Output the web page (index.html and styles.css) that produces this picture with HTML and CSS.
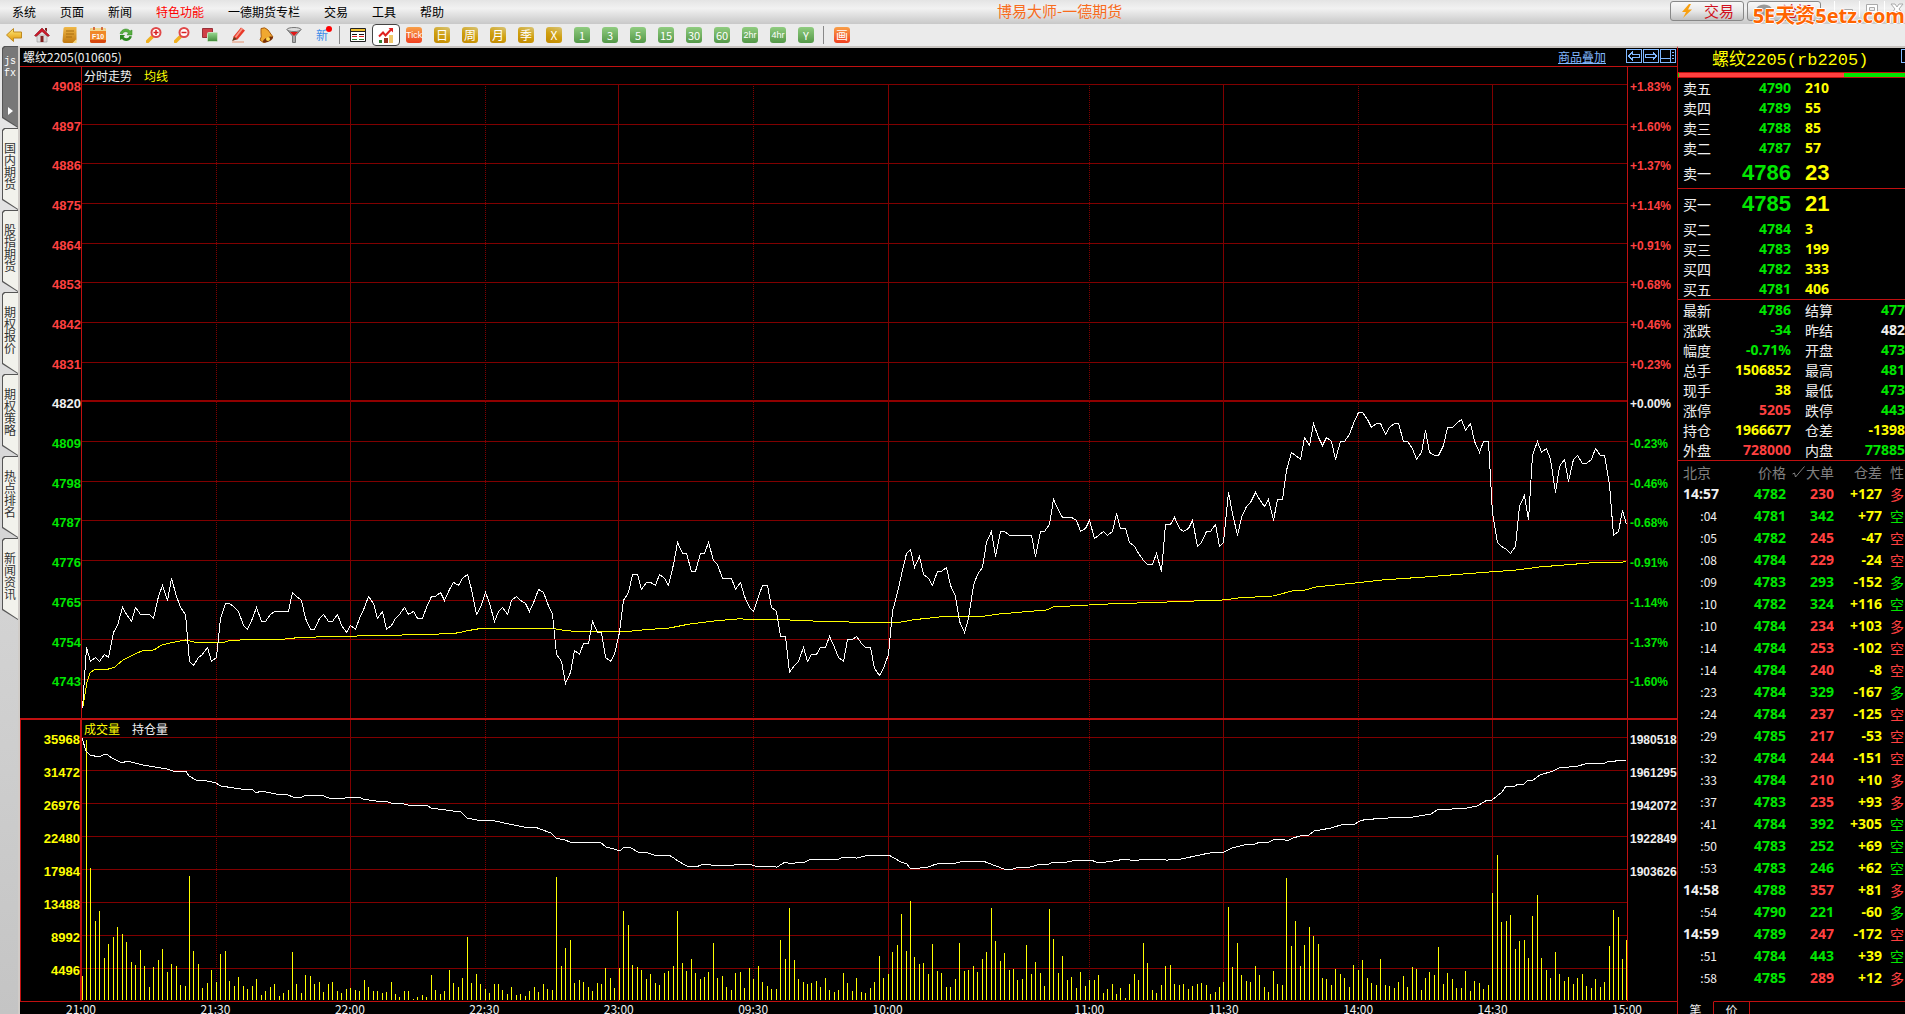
FILE: index.html
```html
<!DOCTYPE html>
<html lang="zh-CN">
<head>
<meta charset="utf-8">
<title>博易大师-一德期货</title>
<link rel="stylesheet" href="styles.css">
</head>
<body>
<svg class="defs" aria-hidden="true">
  <defs>
    <linearGradient id="gold" x1="0" y1="0" x2="0" y2="1"><stop offset="0" stop-color="#fff080"/><stop offset="1" stop-color="#e09000"/></linearGradient>
    <linearGradient id="tan" x1="0" y1="0" x2="0" y2="1"><stop offset="0" stop-color="#f0b848"/><stop offset="1" stop-color="#c07810"/></linearGradient>
    <linearGradient id="leaf" x1="0" y1="0" x2="0" y2="1"><stop offset="0" stop-color="#98d890"/><stop offset="1" stop-color="#408838"/></linearGradient>
  </defs>
</svg>
<header class="menubar">
  <nav class="menu">
    <button>系统</button><button>页面</button><button>新闻</button><button class="hot">特色功能</button><button>一德期货专栏</button><button>交易</button><button>工具</button><button>帮助</button>
  </nav>
  <h1 class="app-title">博易大师-一德期货</h1>
  <div class="actions">
    <button class="pill"><svg width="14" height="16" viewBox="0 0 14 16"><path d="M9 1L2 9h4L3 15l9-8.500H8L11 1z" fill="#f8a010"/></svg>交易</button>
    <button class="pill"><svg width="16" height="14" viewBox="0 0 16 14"><ellipse cx="8" cy="6" rx="8" ry="5.500" fill="#999"/><path d="M5 10l-1 4 5-3z" fill="#999"/></svg>论坛</button>
    <div class="win">
      <button aria-label="最小化"><svg width="14" height="14" viewBox="0 0 14 14"><path d="M1.500 7.500h11v3h-11z" fill="#fff" stroke="#aaa"/></svg></button>
      <button aria-label="最大化"><svg width="14" height="14" viewBox="0 0 14 14"><path d="M1.500 2.500h11v9h-11z M4.500 5.500h5v3h-5z" fill="#fff" fill-rule="evenodd" stroke="#aaa"/></svg></button>
      <button aria-label="关闭"><svg width="14" height="14" viewBox="0 0 14 14"><path d="M1 2h4l2 3 2-3h4L9 7l4 5H9L7 9l-2 3H1l4-5z" fill="#fff" stroke="#aaa"/></svg></button>
    </div>
    <span class="brand">5E天资5etz.com</span>
  </div>
</header>
<div class="toolbar">
  <button aria-label="后退"><svg viewBox="0 0 16 16"><path d="M.5 8L7.500 1.500V5h8v6h-8v3.500z" fill="url(#gold)" stroke="#c08a20"/></svg></button>
  <button aria-label="首页"><svg viewBox="0 0 16 16"><path d="M3 8h10v7H3z" fill="#ddd" stroke="#999" stroke-width=".6"/><path d="M.5 8.500L8 1l7.500 7.500-1.500 1L8 4.500 2 9.500z" fill="#d01828" stroke="#801020" stroke-width=".6"/><path d="M11 1h2v4l-2-2zM6.500 9h3v6h-3z" fill="#802020"/></svg></button>
  <button aria-label="便笺"><svg viewBox="0 0 16 16"><path d="M1.500 1.500Q1.500 0 3 0h11.500v13L12 16H2.500Q.5 16 .5 14z" fill="url(#tan)"/><path d="M4 4h8M4 7h8M4 10h6" stroke="#a86c10"/><path d="M14.500 12v4h-4z" fill="#f8d880"/></svg></button>
  <button aria-label="F10资料"><svg viewBox="0 0 16 16"><rect y="1" width="16" height="15" rx="2" fill="#f08828"/><path d="M0 4V3q0-2 2-2h12q2 0 2 2v1z" fill="#f0d890"/><path d="M4 0v3M12 0v3" stroke="#d04818" stroke-width="1.500"/><path d="M0 13h16v1q0 2-2 2H2q-2 0-2-2z" fill="#d84810"/><text x="8" y="12" text-anchor="middle" class="tiny">F10</text></svg></button>
  <button aria-label="刷新"><svg viewBox="0 0 16 16"><path d="M2 6.500C4 1 10 1 12 4l2-1v5H9l1.500-2C8 4 5.500 4.500 4.500 7z" fill="#58b040" stroke="#2d8420" stroke-width=".5"/><path d="M14 9.500C12 15 6 15 4 12l-2 1V8h5l-1.500 2c2.500 2 5 1.500 6-1z" fill="#2d8820"/></svg></button>
  <button aria-label="放大"><svg viewBox="0 0 16 16"><path d="M1.500 14.500L6 10" stroke="#f0b020" stroke-width="3.500" stroke-linecap="round"/><circle cx="10" cy="5.500" r="4.500" fill="#fff" stroke="#e04848" stroke-width="2"/><path d="M10 3v5M7.500 5.500h5" stroke="#d82020" stroke-width="1.500"/></svg></button>
  <button aria-label="缩小"><svg viewBox="0 0 16 16"><path d="M1.500 14.500L6 10" stroke="#f0b020" stroke-width="3.500" stroke-linecap="round"/><circle cx="10" cy="5.500" r="4.500" fill="#fff" stroke="#e04848" stroke-width="2"/><path d="M7.500 5.500h5" stroke="#d82020" stroke-width="1.500"/></svg></button>
  <button aria-label="叠加"><svg viewBox="0 0 16 16"><path d="M.5 1.500h10v9H.5z" fill="#d04048" stroke="#983038"/><rect x="5.500" y="5.500" width="10" height="9" rx="1" fill="url(#leaf)" stroke="#c8e0c0"/></svg></button>
  <button aria-label="画笔"><svg viewBox="0 0 16 16"><path d="M3.500 9.500L11 .5l4 3L7.500 12.500l-4.500 1z" fill="#e83828"/><path d="M5 9.500L11.500 1 13 2 6 11z" fill="#f89888"/><path d="M4 10l3 2-5 2z" fill="#604020"/><path d="M2 15h12" stroke="#e8b098" stroke-width="1.500"/></svg></button>
  <button aria-label="预警"><svg viewBox="0 0 16 16"><path d="M3 1.500Q7-.5 10 3l5 7-9 6-4-3q2-3 1-7z" fill="#f0a830" stroke="#a85c10"/><ellipse cx="10" cy="12.500" rx="5.500" ry="2.200" transform="rotate(-25 10 12.500)" fill="#783008"/><circle cx="10" cy="12" r="2" fill="#ffd850"/></svg></button>
  <button aria-label="筛选"><svg viewBox="0 0 16 16"><path d="M1 2.500h14L9.500 9v6.500h-3V9z" fill="#aaa" stroke="#777"/><ellipse cx="8" cy="2.500" rx="7" ry="2" fill="#ddd" stroke="#777"/><path d="M4 5h8L8 9z" fill="#e01818"/></svg></button>
  <button class="new" aria-label="新功能">新</button>
  <i class="sep"></i>
  <button aria-label="报价表"><svg viewBox="0 0 16 16"><path d="M.5 1.500h15v13H.5z" fill="#fff" stroke="#222"/><path d="M1 2h14v2H1z" fill="#f0c030"/><path d="M1 4.500h14" stroke="#222"/><path d="M2 7.500h5M9 7.500h5" stroke="#111"/><path d="M2 9.500h5M9 9.500h5" stroke="#e02020"/><path d="M2 12.500h5M9 12.500h5" stroke="#208020"/></svg></button>
  <button class="on" aria-label="分时图"><svg viewBox="0 0 16 16"><path d="M1 13h3v3H1z" fill="#308030"/><path d="M6 11h4v5H6z" fill="#a03020"/><path d="M11 8h4v8h-4z" fill="#f0c868"/><path d="M1 9.500l4-4 2.500 3 6-6.500" fill="none" stroke="#e02020" stroke-width="2"/><path d="M10.500 1H15v4.500z" fill="#e02020"/></svg></button>
  <button><span class="chip red narrow">Tick</span></button>
  <button><span class="chip gold">日</span></button>
  <button><span class="chip gold">周</span></button>
  <button><span class="chip gold">月</span></button>
  <button><span class="chip gold">季</span></button>
  <button><span class="chip gold">X</span></button>
  <button><span class="chip green">1</span></button>
  <button><span class="chip green">3</span></button>
  <button><span class="chip green">5</span></button>
  <button><span class="chip green">15</span></button>
  <button><span class="chip green">30</span></button>
  <button><span class="chip green">60</span></button>
  <button><span class="chip green narrow">2hr</span></button>
  <button><span class="chip green narrow">4hr</span></button>
  <button><span class="chip green">Y</span></button>
  <i class="sep"></i>
  <button><span class="chip red">画</span></button>
</div>
<div class="workspace">
  <nav class="side">
    <button class="tab active"><span>js</span><span>fx</span><svg width="5" height="8" viewBox="0 0 5 8"><path d="M0 0l5 4-5 4z" fill="#fff"/></svg></button>
    <button class="tab"><span>国内期货</span></button>
    <button class="tab"><span>股指期货</span></button>
    <button class="tab"><span>期权报价</span></button>
    <button class="tab"><span>期权策略</span></button>
    <button class="tab"><span>热点排名</span></button>
    <button class="tab"><span>新闻资讯</span></button>
  </nav>
  <main class="charts">
    <div class="chart-head">
      <h2>螺纹2205(010605)</h2>
      <a href="#overlay">商品叠加</a>
      <div class="boxes">
        <button aria-label="上一个"><svg viewBox="0 0 16 14"><path d="M.5.5h15v13H.5z M2.500 7L6 3.500v2h7.500v3H6v2z"/></svg></button>
        <button aria-label="下一个"><svg viewBox="0 0 16 14"><path d="M.5.5h15v13H.5z M13.500 7L10 3.500v2H2.500v3H10v2z"/></svg></button>
        <button aria-label="布局"><svg viewBox="0 0 16 14"><path d="M.5.5h15v13H.5z M10.500 0v14 M0 9.500h10 M12 3.500h2 M12 6.500h2 M12 9.500h2"/></svg></button>
      </div>
    </div>
    <section class="panel price">
      <ol class="scale left"><li class="up">4908</li><li class="up">4897</li><li class="up">4886</li><li class="up">4875</li><li class="up">4864</li><li class="up">4853</li><li class="up">4842</li><li class="up">4831</li><li>4820</li><li class="down">4809</li><li class="down">4798</li><li class="down">4787</li><li class="down">4776</li><li class="down">4765</li><li class="down">4754</li><li class="down">4743</li></ol>
      <div class="plot">
        <svg id="price" viewBox="82 67 1545 651" preserveAspectRatio="none">
          <path class="grid" id="price-grid"/>
          <path class="zero" d="M82 401H1627"/>
          <path class="grid" d="M350.500 84V718M618.500 84V718M888.500 84V718M1223.500 84V718M1492.500 84V718"/>
          <path class="grid dots" d="M216.500 84V718M485.500 84V718M753.500 84V718M1089.500 84V718M1358.500 84V718"/>
          <polyline class="avg" points="83,706 87,682 90,673 94,670 110,669 115,667 123,660 131,656 142,651 154,650 162,645 175,642 186,640 193,642 202,643 222,643 228,641 241,640 290,639 295,638 318,637 361,636 406,635 442,634 458,633 466,631 478,629 526,629 555,629 568,631 602,632 623,632 643,630 670,628 690,624 715,621 738,619 788,620 810,621 882,623 903,622 912,620 940,617 978,617 1000,614 1047,610 1053,607 1090,605 1110,604 1169,602 1224,600 1239,598 1274,596 1292,591 1306,590 1316,587 1356,583 1383,580 1426,577 1477,573 1517,570 1540,567 1590,563 1626,562"/>
          <path class="line" id="price-line"/>
        </svg>
        <p class="legend"><span>分时走势</span><span class="yellow">均线</span></p>
      </div>
      <ol class="scale right"><li class="up">+1.83%</li><li class="up">+1.60%</li><li class="up">+1.37%</li><li class="up">+1.14%</li><li class="up">+0.91%</li><li class="up">+0.68%</li><li class="up">+0.46%</li><li class="up">+0.23%</li><li>+0.00%</li><li class="down">-0.23%</li><li class="down">-0.46%</li><li class="down">-0.68%</li><li class="down">-0.91%</li><li class="down">-1.14%</li><li class="down">-1.37%</li><li class="down">-1.60%</li></ol>
    </section>
    <section class="panel volume">
      <ol class="scale left yellow"><li>35968</li><li>31472</li><li>26976</li><li>22480</li><li>17984</li><li>13488</li><li>8992</li><li>4496</li></ol>
      <div class="plot">
        <svg id="volume" viewBox="82 720 1545 281" preserveAspectRatio="none">
          <path class="grid" d="M82 737.500H1627M82 770.500H1627M82 803.500H1627M82 836.500H1627M82 869.500H1627M82 902.500H1627M82 935.500H1627M82 968.500H1627"/>
          <path class="grid" d="M350.500 720V1001M618.500 720V1001M888.500 720V1001M1223.500 720V1001M1492.500 720V1001"/>
          <path class="grid dots" d="M216.500 720V1001M485.500 720V1001M753.500 720V1001M1089.500 720V1001M1358.500 720V1001"/>
          <path class="bars" id="volume-bars"/>
          <polyline class="line" points="82,738 86,751 90,755 99,757 105,754 108,755 112,758 122,763 127,761 143,765 167,769 173,771 186,771 189,776 198,781 203,780 216,783 221,786 241,789 253,790 256,793 261,791 276,794 288,795 293,797 302,797 306,795 321,795 329,798 345,798 351,797 355,798 359,797 363,799 376,801 388,802 391,803 400,803 408,805 427,805 431,808 461,812 467,818 477,820 490,820 524,827 535,827 551,833 556,838 565,840 570,842 600,842 606,847 614,849 620,851 624,847 631,848 638,852 648,853 654,855 664,856 669,855 674,858 678,861 687,866 696,867 703,864 709,864 713,866 722,865 727,866 740,864 745,865 749,864 758,867 762,866 777,867 785,862 791,864 798,862 805,862 811,859 839,859 843,857 857,858 864,856 889,855 901,862 907,864 910,868 920,868 928,867 936,864 956,863 964,861 983,861 1004,869 1013,869 1018,867 1027,868 1040,864 1049,864 1053,862 1063,863 1071,861 1091,860 1099,863 1126,859 1134,861 1143,859 1167,860 1181,859 1209,853 1224,852 1232,848 1244,845 1255,844 1260,842 1269,842 1273,840 1283,839 1287,841 1293,838 1303,835 1309,835 1314,831 1331,828 1344,824 1353,825 1360,821 1367,819 1371,820 1376,818 1380,819 1395,817 1398,818 1413,817 1431,814 1437,810 1467,808 1477,806 1487,800 1492,800 1497,796 1502,792 1506,786 1515,786 1518,784 1524,784 1528,780 1533,780 1540,775 1553,771 1559,768 1578,766 1585,764 1605,763 1609,761 1614,762 1617,760 1624,760 1626,761"/>
        </svg>
        <p class="legend"><span class="yellow">成交量</span><span>持仓量</span></p>
      </div>
      <ol class="scale right"><li>1980518</li><li>1961295</li><li>1942072</li><li>1922849</li><li>1903626</li></ol>
    </section>
    <ol class="times"><li>21:00</li><li>21:30</li><li>22:00</li><li>22:30</li><li>23:00</li><li>09:30</li><li>10:00</li><li>11:00</li><li>11:30</li><li>14:00</li><li>14:30</li><li>15:00</li></ol>
  </main>
  <aside class="quote">
    <div class="quote-head">
      <h2>螺纹2205(rb2205)</h2>
      <button class="corner" aria-label="展开"></button>
    </div>
    <div class="ratio"><i></i></div>
    <table class="book">
      <tbody>
      <tr><th>卖五</th><td>4790</td><td>210</td></tr>
      <tr><th>卖四</th><td>4789</td><td>55</td></tr>
      <tr><th>卖三</th><td>4788</td><td>85</td></tr>
      <tr><th>卖二</th><td>4787</td><td>57</td></tr>
      <tr class="best"><th>卖一</th><td>4786</td><td>23</td></tr>
      </tbody>
    </table>
    <table class="book">
      <tbody>
      <tr class="best"><th>买一</th><td>4785</td><td>21</td></tr>
      <tr><th>买二</th><td>4784</td><td>3</td></tr>
      <tr><th>买三</th><td>4783</td><td>199</td></tr>
      <tr><th>买四</th><td>4782</td><td>333</td></tr>
      <tr><th>买五</th><td>4781</td><td>406</td></tr>
      </tbody>
    </table>
    <table class="stats">
      <tbody>
      <tr><th>最新</th><td class="down">4786</td><th>结算</th><td class="down">477</td></tr>
      <tr><th>涨跌</th><td class="down">-34</td><th>昨结</th><td>482</td></tr>
      <tr><th>幅度</th><td class="down">-0.71%</td><th>开盘</th><td class="down">473</td></tr>
      <tr><th>总手</th><td class="yellow">1506852</td><th>最高</th><td class="down">481</td></tr>
      <tr><th>现手</th><td class="yellow">38</td><th>最低</th><td class="down">473</td></tr>
      <tr><th>涨停</th><td class="up">5205</td><th>跌停</th><td class="down">443</td></tr>
      <tr><th>持仓</th><td class="yellow">1966677</td><th>仓差</th><td class="yellow">-1398</td></tr>
      <tr><th>外盘</th><td class="up">728000</td><th>内盘</th><td class="down">77885</td></tr>
      </tbody>
    </table>
    <table class="trades">
      <thead><tr><th>北京</th><th>价格</th><th><svg width="13" height="12" viewBox="0 0 13 12"><path d="M.5 8l2-1 1 4L12.500.5" fill="none" stroke="#808080"/></svg>大单</th><th>仓差</th><th>性</th></tr></thead>
      <tbody>
      <tr class="r"><td class="min">14:57</td><td>4782</td><td>230</td><td>+127</td><td>多</td></tr>
      <tr class="g"><td>:04</td><td>4781</td><td>342</td><td>+77</td><td>空</td></tr>
      <tr class="r"><td>:05</td><td>4782</td><td>245</td><td>-47</td><td>空</td></tr>
      <tr class="r"><td>:08</td><td>4784</td><td>229</td><td>-24</td><td>空</td></tr>
      <tr class="g"><td>:09</td><td>4783</td><td>293</td><td>-152</td><td>多</td></tr>
      <tr class="g"><td>:10</td><td>4782</td><td>324</td><td>+116</td><td>空</td></tr>
      <tr class="r"><td>:10</td><td>4784</td><td>234</td><td>+103</td><td>多</td></tr>
      <tr class="r"><td>:14</td><td>4784</td><td>253</td><td>-102</td><td>空</td></tr>
      <tr class="r"><td>:14</td><td>4784</td><td>240</td><td>-8</td><td>空</td></tr>
      <tr class="g"><td>:23</td><td>4784</td><td>329</td><td>-167</td><td>多</td></tr>
      <tr class="r"><td>:24</td><td>4784</td><td>237</td><td>-125</td><td>空</td></tr>
      <tr class="r"><td>:29</td><td>4785</td><td>217</td><td>-53</td><td>空</td></tr>
      <tr class="r"><td>:32</td><td>4784</td><td>244</td><td>-151</td><td>空</td></tr>
      <tr class="r"><td>:33</td><td>4784</td><td>210</td><td>+10</td><td>多</td></tr>
      <tr class="r"><td>:37</td><td>4783</td><td>235</td><td>+93</td><td>多</td></tr>
      <tr class="g"><td>:41</td><td>4784</td><td>392</td><td>+305</td><td>空</td></tr>
      <tr class="g"><td>:50</td><td>4783</td><td>252</td><td>+69</td><td>空</td></tr>
      <tr class="g"><td>:53</td><td>4783</td><td>246</td><td>+62</td><td>空</td></tr>
      <tr class="r"><td class="min">14:58</td><td>4788</td><td>357</td><td>+81</td><td>多</td></tr>
      <tr class="g"><td>:54</td><td>4790</td><td>221</td><td>-60</td><td>多</td></tr>
      <tr class="r"><td class="min">14:59</td><td>4789</td><td>247</td><td>-172</td><td>空</td></tr>
      <tr class="g"><td>:51</td><td>4784</td><td>443</td><td>+39</td><td>空</td></tr>
      <tr class="r"><td>:58</td><td>4785</td><td>289</td><td>+12</td><td>多</td></tr>
      </tbody>
    </table>
    <div class="quote-tabs"><button class="current">笔</button><button>价</button><i></i></div>
  </aside>
</div>
<script src="app.js"></script>
</body>
</html>
```
FILE: app.js
```js
// One value per trading minute, 21:00 to 15:00.
const prices = [
  4735,4752,4748,4749,4748,4750,4749,4756,4758,4763,4761,4759,4763,4761,4761,4761,4760,4766,4769,4765,
  4771,4766,4763,4761,4748,4747,4749,4750,4752,4748,4749,4760,4764,4764,4763,4762,4758,4757,4760,4763,
  4759,4759,4761,4762,4762,4762,4762,4767,4766,4765,4760,4757,4757,4760,4761,4759,4759,4761,4758,4756,
  4758,4757,4760,4763,4766,4764,4760,4762,4757,4758,4760,4761,4763,4761,4762,4760,4760,4763,4766,4766,
  4767,4765,4768,4770,4769,4771,4772,4768,4761,4763,4767,4764,4759,4762,4763,4761,4765,4766,4765,4764,
  4762,4765,4768,4767,4764,4761,4750,4748,4742,4745,4751,4750,4753,4753,4759,4756,4756,4749,4748,4750,
  4756,4765,4767,4772,4772,4768,4770,4770,4769,4772,4771,4769,4775,4781,4778,4778,4773,4773,4778,4778,
  4781,4776,4775,4771,4771,4771,4768,4770,4766,4763,4762,4766,4769,4769,4763,4762,4755,4755,4745,4747,
  4748,4752,4748,4750,4750,4752,4752,4755,4752,4749,4748,4754,4754,4755,4753,4752,4752,4746,4744,4746,
  4750,4762,4767,4772,4778,4779,4774,4777,4772,4771,4769,4773,4773,4774,4769,4766,4759,4756,4760,4769,
  4772,4774,4781,4784,4777,4784,4784,4783,4783,4783,4783,4783,4783,4777,4784,4784,4786,4793,4790,4788,
  4788,4788,4787,4784,4785,4787,4782,4783,4784,4783,4784,4789,4785,4785,4781,4780,4778,4776,4775,4775,
  4778,4773,4786,4786,4788,4785,4784,4785,4787,4780,4781,4784,4784,4786,4780,4781,4795,4789,4783,4788,
  4791,4792,4795,4793,4791,4793,4787,4793,4793,4801,4806,4805,4804,4810,4808,4814,4810,4808,4810,4809,
  4804,4809,4809,4811,4814,4817,4817,4815,4813,4814,4814,4811,4813,4814,4814,4809,4809,4807,4804,4806,
  4812,4806,4805,4805,4808,4813,4813,4814,4815,4812,4814,4809,4806,4809,4809,4789,4781,4780,4779,4778,
  4780,4791,4794,4787,4805,4809,4806,4807,4804,4795,4802,4804,4798,4804,4805,4803,4803,4804,4807,4805,
  4805,4797,4783,4784,4790,4786
];
const bars = [
  24,260,132,79,89,42,56,63,73,66,58,38,35,50,34,13,33,40,51,28,
  36,34,15,14,124,49,36,12,17,30,18,46,49,19,14,23,14,11,14,21,
  5,9,13,16,4,7,10,48,16,7,25,24,16,18,8,16,18,9,7,11,
  12,10,9,20,13,9,9,7,8,18,6,3,9,9,1,3,5,3,25,10,
  6,9,30,17,13,22,63,17,26,16,11,7,16,16,10,6,13,5,6,4,
  9,13,8,16,11,10,123,34,52,60,17,20,18,13,9,17,16,32,22,12,
  32,89,75,35,33,30,21,26,17,15,27,29,34,89,37,29,41,27,21,23,
  28,57,22,24,13,10,27,28,12,32,21,34,18,14,11,11,60,41,92,40,
  21,18,16,17,19,13,22,10,8,10,27,17,9,22,8,7,12,18,44,22,
  26,48,55,86,49,99,43,36,37,26,56,29,27,13,13,21,57,29,30,34,
  28,41,48,92,59,39,47,30,31,20,21,55,26,38,27,14,91,61,27,44,
  20,23,12,28,14,20,20,25,7,11,16,6,12,2,16,26,20,57,37,10,
  7,15,34,35,16,15,16,11,14,16,17,15,6,8,13,18,93,33,57,25,
  19,18,34,25,13,8,29,16,15,122,54,79,34,55,73,64,56,22,21,15,
  31,26,22,13,35,30,40,22,17,15,41,15,14,12,18,24,13,33,31,10,
  22,28,25,53,16,27,21,12,12,29,9,19,17,11,15,107,145,78,79,85,
  51,59,60,42,84,105,42,30,22,48,26,19,23,16,22,26,14,12,21,13,
  18,54,90,83,41,60
];
const x = i => Math.min(1626, Math.floor(82 + i * 1545 / 345)) + 0.5;
const y = p => Math.round(84 + (4908 - p) * 39.67 / 11) + 0.5;
const set = (id, d) => document.getElementById(id).setAttribute("d", d);

set("price-line", "M" + prices.map((p, i) => x(i) + " " + y(p)).join("L"));
set("volume-bars", bars.map((h, i) => `M${x(i)} 1000V${1000 - h}`).join(""));

let rows = "";
for (let p = 4908; p >= 4743; p -= 11) {
  if (p !== 4820) rows += `M82 ${y(p)}H1627`;
}
set("price-grid", rows);
```
FILE: styles.css
```css
* { box-sizing: border-box; }
body {
  margin: 0;
  height: 100vh;
  overflow: hidden;
  display: flex;
  flex-direction: column;
  background: #000;
  color: #f0f0f0;
  font: 12px/16px "Noto Sans CJK SC", sans-serif;
}
h1, h2, p, ol { margin: 0; padding: 0; font-weight: normal; }
ol { list-style: none; }
button { margin: 0; padding: 0; border: 0; background: none; color: inherit; font: inherit; }
.defs { position: absolute; width: 0; height: 0; }
.up { color: #ff4040; }
.down { color: #00e600; }
.yellow { color: #ff0; }

/* menu bar */
.menubar {
  flex: none;
  display: flex;
  height: 24px;
  background: linear-gradient(#e4e4e4, #f2f2f2 35%, #c8c8c8);
  color: #000;
}
.menu { display: flex; gap: 24px; padding-left: 12px; }
.menu .hot { color: #f00; }
.app-title { flex: 1; padding-left: 5px; text-align: center; font-size: 15px; line-height: 22px; color: #f86c1c; }
.actions { position: relative; display: flex; align-items: flex-start; gap: 3px; width: 235px; padding-top: 1px; }
.pill {
  flex: none;
  display: flex;
  align-items: center;
  justify-content: center;
  gap: 10px;
  width: 74px;
  height: 20px;
  border: 1px solid #888;
  border-radius: 3px;
  background: linear-gradient(#f8f8f8, #e8e8e8 50%, #c0c0c0);
  color: #d01020;
  font-size: 15px;
}
.win { display: flex; padding-left: 10px; }
.win button { width: 25px; height: 16px; border-left: 1px solid #fff; }
.win svg { display: block; margin: auto; }
.brand {
  position: absolute;
  right: 0;
  top: 2px;
  white-space: nowrap;
  font: bold 20px/28px "Open Sans", "Noto Sans CJK SC", sans-serif;
  color: #ff6400;
  text-shadow: 1px 0 #fff, -1px 0 #fff, 0 1px #fff, 0 -1px #fff;
}

/* toolbar */
.toolbar { flex: none; display: flex; height: 22px; background: #ebebeb; }
.toolbar button { width: 28px; height: 22px; display: grid; place-items: center; }
.toolbar svg { width: 16px; height: 16px; }
.toolbar .on { border: 1px solid #444; border-radius: 4px; background: #fff; }
.tiny { font: bold 7px "Liberation Sans", sans-serif; fill: #fff; }
.toolbar .new { position: relative; color: #3c8ce8; }
.new::after { content: ""; position: absolute; right: 4px; top: 2px; width: 6px; height: 6px; border-radius: 50%; background: #f00; }
.sep { width: 5px; margin: 2px 0 2px 3px; border-left: 1px solid #888; }
.chip { display: block; width: 16px; height: 16px; border-radius: 3px; text-align: center; line-height: 16px; color: #fff; font-size: 12px; }
.narrow { font: 9px/16px "Liberation Sans", sans-serif; }
.gold { background: linear-gradient(20deg, #c08800, #d0a010 50%, #d8c478); }
.green { background: linear-gradient(#90cc80, #549848); font-size: 11px; }
.green.narrow { font-size: 9px; }
.red { background: linear-gradient(#f8a048, #f04020); }

/* workspace */
.workspace { flex: 1; min-height: 0; display: grid; grid-template-columns: 20px minmax(0, 1fr) 228px; }
.side {
  display: flex;
  flex-direction: column;
  padding-left: 2px;
  border-right: 2px solid #d0ccc8;
  background: linear-gradient(#e8e8e8, #c4c4c4);
}
.tab {
  position: relative;
  height: 82px;
  padding: 14px 2px 0;
  background: #555;
  color: #333;
  line-height: 12px;
  clip-path: polygon(0 2px, 2px 0, 100% 0, 100% 82px, 0 72px);
  display: flex;
  flex-direction: column;
  align-items: center;
}
.tab::before {
  content: "";
  position: absolute;
  inset: 1px 0 1px 1px;
  background: #f2f2ec;
  clip-path: polygon(0 2px, 2px 0, 100% 0, 100% 80px, 0 70px);
}
.tab span { position: relative; width: 12px; text-align: center; overflow-wrap: anywhere; }
.tab.active { padding-top: 10px; color: #fff; font: 10px/12px "Liberation Mono", monospace; }
.tab.active::before { background: #787878; }
.tab.active svg { position: relative; margin-top: 27px; }

.charts { display: flex; flex-direction: column; border-top: 2px solid #c8c4c0; min-height: 0; }
.chart-head { flex: none; display: flex; height: 19px; padding: 0 0 0 3px; border-bottom: 1px solid #c01010; line-height: 18px; }
.chart-head h2 { flex: 1; font-size: 12px; }
.chart-head a { color: #80b8ff; margin-right: 20px; }
.boxes { display: flex; gap: 1px; padding: 1px 1px 0 0; }
.boxes button, .boxes svg { display: block; width: 16px; height: 14px; }
.boxes path { fill: none; stroke: #80b8ff; shape-rendering: crispEdges; }
.panel { display: grid; grid-template-columns: 62px minmax(0, 1fr) 50px; min-height: 0; }
.price { flex: 653 1 0; border-bottom: 2px solid #c01010; }
.volume { flex: 282 1 0; border-bottom: 1px solid #c01010; }
.scale {
  display: grid;
  grid-auto-rows: minmax(0, 1fr);
  padding: 12px 0 4px;
  font: bold 12px/16px "Liberation Sans", sans-serif;
}
.price .scale { grid-template-rows: repeat(16, minmax(0, 1fr)); }
.volume .scale { grid-template-rows: repeat(8, minmax(0, 1fr)); padding-bottom: 5px; }
.scale.left { border-right: 1px solid #c01010; text-align: right; font-size: 13px; }
.scale.right { border-left: 1px solid #c01010; padding-left: 2px; }
.volume .scale.left { border-left: 1px solid #c01010; border-right-width: 2px; }
.plot { position: relative; min-width: 0; min-height: 0; }
.plot svg { position: absolute; width: 100%; height: 100%; shape-rendering: crispEdges; fill: none; }
.plot svg * { vector-effect: non-scaling-stroke; stroke-width: 1px; fill: none; }
.plot .grid { stroke: #800000; }
.plot .dots { stroke-dasharray: 1 1; }
.plot .zero { stroke: #900000; stroke-width: 2px; }
.plot .line { stroke: #fff; }
.plot .avg, .plot .bars { stroke: #ff0; }
.legend { position: absolute; left: 2px; top: 1px; display: flex; gap: 12px; }
.times {
  flex: none;
  display: grid;
  grid-template-columns: repeat(6, minmax(0, 30fr)) minmax(0, 45fr) repeat(4, minmax(0, 30fr)) 0;
  height: 12px;
  margin: 0 50px 0 61px;
}
.times li { display: flex; justify-content: center; width: 0; line-height: 14px; }

/* quote panel */
.quote { display: flex; flex-direction: column; border-left: 1px solid #c01010; border-top: 2px solid #c8c4c0; min-height: 0; overflow: hidden; }
.quote-head { flex: none; position: relative; height: 24px; }
.quote-head h2 { padding-left: 34px; font: 17px/26px "Liberation Mono", "Noto Sans CJK SC", monospace; color: #ff0; }
.corner { position: absolute; right: -12px; top: 1px; width: 16px; height: 14px; border: 1px solid #80b8ff; }
.ratio { flex: none; height: 6px; border: solid #c01010; border-width: 1px 0; background: #00e600; padding-left: 1px; }
.ratio i { display: block; width: 73%; height: 4px; background: #ff4040; }
table { flex: none; width: 100%; border-collapse: collapse; table-layout: fixed; line-height: 20px; }
th, td { padding: 0; text-align: left; font-size: 14px; white-space: nowrap; overflow: hidden; }
th { font-weight: normal; }
td { font-family: "Noto Sans", "Noto Sans CJK SC", sans-serif; font-weight: bold; text-align: right; }
tr { height: 20px; }
.book, .stats { border-bottom: 1px solid #c01010; border-collapse: separate; border-spacing: 0; }
.book th, .stats th { width: 42px; padding-left: 5px; }
.book td:nth-child(2), .stats td:nth-child(2) { width: 71px; }
.book td { color: #00e600; }
.book td:nth-child(3) { padding-left: 14px; text-align: left; color: #ff0; }
.book .best { height: 30px; }
.book .best td { font: bold 22px/30px "Liberation Sans", sans-serif; }
.stats th:nth-child(3) { width: 56px; padding-left: 14px; }
.trades { line-height: 22px; }
.trades tr { height: 22px; }
.trades th { color: #808080; text-align: right; width: 48px; }
.trades th svg { margin-right: 1px; }
.trades th:first-child { width: 41px; padding-left: 5px; text-align: left; }
.trades th:nth-child(2) { width: 67px; }
.trades th:last-child { width: auto; padding-left: 8px; text-align: left; }
.trades td:first-child { font: 12px/22px "Noto Sans CJK SC", sans-serif; padding-right: 2px; }
.trades td.min { font: bold 14px/22px "Noto Sans", sans-serif; padding-right: 0; }
.trades td:nth-child(2), .g td:nth-child(3), .g td:nth-child(5) { color: #00e600; }
.r td:nth-child(3), .r td:nth-child(5) { color: #ff4040; }
.trades td:nth-child(4) { color: #ff0; }
.trades td:nth-child(5) { padding-left: 8px; text-align: left; font-weight: normal; font-family: "Noto Sans CJK SC", sans-serif; }
.quote-tabs { flex: none; display: flex; height: 13px; margin-top: auto; line-height: 16px; }
.quote-tabs button { width: 36px; height: 16px; border: solid #c01010; border-width: 1px 1px 0 0; }
.quote-tabs .current { border-top-color: #000; }
.quote-tabs i { flex: 1; border-top: 1px solid #c01010; }
```
